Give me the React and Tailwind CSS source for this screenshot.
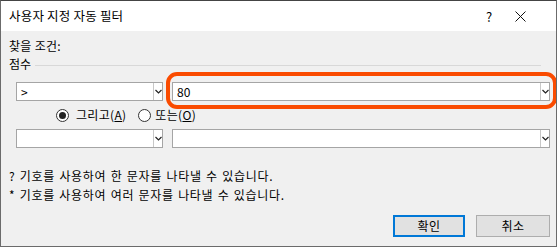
import React from "react";

const font = { fontFamily: '"Noto Sans CJK KR", "Noto Sans", sans-serif' };

function Chevron() {
  return (
    <svg width="7" height="5" viewBox="0 0 7 5" className="block">
      <polyline points="0.5,1 3.5,4 6.5,1" fill="none" stroke="#222" strokeWidth="1.2" />
    </svg>
  );
}

function Combo({ value, className }) {
  return (
    <div className={"flex h-[19px] border border-[#a5a5a5] bg-white " + className}>
      <div className="flex-1 flex items-center pl-[4px] text-[12px] leading-none text-black">{value}</div>
      <div className="w-[9px] border-l border-[#c8c8c8] flex items-center justify-center">
        <Chevron />
      </div>
    </div>
  );
}

function Radio({ checked }) {
  return (
    <div className="w-[13px] h-[13px] rounded-full border border-[#333] bg-white flex items-center justify-center">
      {checked && <div className="w-[7px] h-[7px] rounded-full bg-[#222]" />}
    </div>
  );
}

export default function App() {
  return (
    <div style={font} className="w-[557px] h-[247px] overflow-hidden border border-[#6b6b6b] border-t-[#444] bg-[#f0f0f0] flex flex-col text-black">
      <div className="h-[30px] bg-white flex items-center shrink-0">
        <div className="pl-[8px] text-[12.5px] leading-none flex-1 pt-[1px] tracking-[0.2px]">사용자 지정 자동 필터</div>
        <div className="w-[10px] text-[13px] leading-none mr-[19px]">?</div>
        <svg width="11" height="11" viewBox="0 0 11 11" className="mr-[30px]">
          <line x1="0.5" y1="0.5" x2="10.5" y2="10.5" stroke="#111" strokeWidth="1" />
          <line x1="10.5" y1="0.5" x2="0.5" y2="10.5" stroke="#111" strokeWidth="1" />
        </svg>
      </div>
      <div className="flex-1 flex flex-col pl-[8px] text-[12px]">
        <div className="mt-[8px] h-[14px] leading-[14px] tracking-[0.3px]">찾을 조건:</div>
        <div className="mt-[4px] h-[14px] flex items-center">
          <span className="leading-[14px]">점수</span>
          <div className="flex-1 h-px bg-[#d8d8d8] ml-[4px] mr-[15px] mt-[2px]" />
        </div>
        <div className="mt-[11px] flex pl-[7px]">
          <Combo value=">" className="w-[147px]" />
          <div className="relative ml-[9px]">
            <Combo value="80" className="w-[378px]" />
            <div className="absolute left-[-6px] top-[-10px] right-[-7px] bottom-[-8px] border-[4px] border-[#fa4b00] rounded-[11px]" />
          </div>
        </div>
        <div className="mt-[7px] h-[14px] flex items-center pl-[47px]">
          <Radio checked />
          <span className="ml-[7px] leading-none tracking-[0.3px]">그리고(<span className="underline">A</span>)</span>
          <div className="ml-[12px]"><Radio /></div>
          <span className="ml-[4px] leading-none tracking-[0.3px]">또는(<span className="underline">O</span>)</span>
        </div>
        <div className="mt-[7px] flex pl-[7px]">
          <Combo value="" className="w-[147px]" />
          <Combo value="" className="w-[378px] ml-[9px]" />
        </div>
        <div className="mt-[21px] leading-[14px] tracking-[0.7px] [word-spacing:1px]">? 기호를 사용하여 한 문자를 나타낼 수 있습니다.</div>
        <div className="mt-[5px] leading-[14px] tracking-[0.7px] [word-spacing:1px]">* 기호를 사용하여 여러 문자를 나타낼 수 있습니다.</div>
        <div className="mt-[13px] flex justify-end pr-[6px]">
          <div className="w-[72px] h-[22px] border-2 border-[#0078d7] bg-[#e1e1e1] flex items-center justify-center leading-none tracking-[0.5px]">확인</div>
          <div className="w-[74px] h-[22px] ml-[11px] border border-[#adadad] bg-[#e1e1e1] flex items-center justify-center leading-none tracking-[0.5px]">취소</div>
        </div>
      </div>
    </div>
  );
}
